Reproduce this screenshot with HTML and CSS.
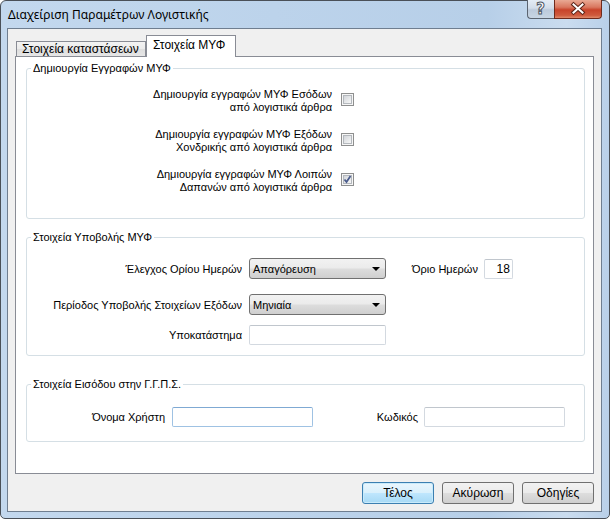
FILE: index.html
```html
<!DOCTYPE html>
<html lang="el">
<head>
<meta charset="utf-8">
<title>Διαχείριση Παραμέτρων Λογιστικής</title>
<link rel="stylesheet" href="styles.css">
</head>
<body>
<div class="window">
  <div class="titlebar">
    <span class="title">Διαχείριση Παραμέτρων Λογιστικής</span>
    <div class="caption-btns">
      <div class="cbtn help">
        <svg width="27" height="19" viewBox="0 0 27 19"><text x="13.5" y="14.5" text-anchor="middle" class="qmark">?</text></svg>
      </div>
      <div class="cbtn close">
        <svg width="48" height="19" viewBox="0 0 48 19">
          <path d="M19.5 5.5 L28.5 13.5 M28.5 5.5 L19.5 13.5" stroke="#5a2418" stroke-width="4" stroke-linecap="square" fill="none"/>
          <path d="M19.5 5.5 L28.5 13.5 M28.5 5.5 L19.5 13.5" stroke="#ffffff" stroke-width="2" stroke-linecap="square" fill="none"/>
        </svg>
      </div>
    </div>
  </div>
  <div class="client">
    <div class="tabs">
      <div class="tab">Στοιχεία καταστάσεων</div>
      <div class="tab active">Στοιχεία ΜΥΦ</div>
    </div>
    <div class="panel">
      <fieldset class="group g1">
        <legend>Δημιουργία Εγγραφών ΜΥΦ</legend>
        <div class="cbrow">
          <div class="cblabel">Δημιουργία εγγραφών ΜΥΦ Εσόδων<br>από λογιστικά άρθρα</div>
          <span class="cb"><span class="cb-in"></span></span>
        </div>
        <div class="cbrow">
          <div class="cblabel">Δημιουργία εγγραφών ΜΥΦ Εξόδων<br>Χονδρικής από λογιστικά άρθρα</div>
          <span class="cb"><span class="cb-in"></span></span>
        </div>
        <div class="cbrow">
          <div class="cblabel">Δημιουργία εγγραφών ΜΥΦ Λοιπών<br>Δαπανών από λογιστικά άρθρα</div>
          <span class="cb checked"><span class="cb-in"></span>
            <svg class="tick" width="13" height="13" viewBox="0 0 13 13"><path d="M3.5 6.5 L5.5 9 L9.5 3" stroke="#4a5c8c" stroke-width="1.8" fill="none"/></svg>
          </span>
        </div>
      </fieldset>

      <fieldset class="group g2">
        <legend>Στοιχεία Υποβολής ΜΥΦ</legend>
        <div class="frow r1">
          <span class="flabel">Έλεγχος Ορίου Ημερών</span>
          <div class="combo"><span>Απαγόρευση</span><i class="arrow"></i></div>
          <span class="limit-label">Όριο Ημερών</span>
          <div class="textbox num">18</div>
        </div>
        <div class="frow r2">
          <span class="flabel">Περίοδος Υποβολής Στοιχείων Εξόδων</span>
          <div class="combo"><span>Μηνιαία</span><i class="arrow"></i></div>
        </div>
        <div class="frow r3">
          <span class="flabel">Υποκατάστημα</span>
          <div class="textbox wide"></div>
        </div>
      </fieldset>

      <fieldset class="group g3">
        <legend>Στοιχεία Εισόδου στην Γ.Γ.Π.Σ.</legend>
        <div class="loginrow">
          <span class="user-label">Όνομα Χρήστη</span>
          <div class="textbox login focused"></div>
          <span class="pass-label">Κωδικός</span>
          <div class="textbox login"></div>
        </div>
      </fieldset>
    </div>
    <div class="buttons">
      <div class="btn default">Τέλος</div>
      <div class="btn">Ακύρωση</div>
      <div class="btn">Οδηγίες</div>
    </div>
  </div>
</div>
</body>
</html>
```
FILE: styles.css
```css
* { box-sizing: border-box; }

body {
  margin: 0;
  font-family: "Liberation Sans", Arial, sans-serif;
  font-size: 11px;
  color: #000;
  background: #fff;
}

.window {
  width: 610px;
  height: 519px;
  border: 1px solid #4a5058;
  border-radius: 6px 6px 5px 5px;
  background: linear-gradient(90deg, #c3d8ee 0%, #bcd3eb 45%, #b7cfe8 80%, #cadcef 93%, #b9d0e9 100%);
  padding: 0 7px 6px 6px;
  display: flex;
  flex-direction: column;
}

.titlebar {
  height: 27px;
  display: flex;
  justify-content: space-between;
  align-items: flex-start;
}

.title {
  font-family: "Noto Sans", "Open Sans", sans-serif;
  font-size: 12px;
  line-height: 16px;
  padding: 6px 0 0 1px;
}

.caption-btns {
  display: flex;
  margin-top: -1px;
}

.cbtn {
  height: 19px;
  border: 1px solid #5b6470;
  border-top: none;
  display: flex;
}
.cbtn svg { display: block; margin: -1px; }

.help {
  width: 27px;
  border-radius: 0 0 0 4px;
  border-right: none;
  background: linear-gradient(180deg, #e4ecf5 0%, #d3dde9 45%, #bccadb 55%, #c8d5e3 100%);
}
.qmark {
  font-family: "DejaVu Sans", sans-serif;
  font-size: 15px;
  font-weight: bold;
  fill: #fff;
  stroke: #4d5663;
  stroke-width: 1;
}

.close {
  width: 48px;
  border-radius: 0 0 4px 0;
  border-color: #6f2a1c;
  background: linear-gradient(180deg, #e9a994 0%, #d9775f 40%, #c8432a 55%, #cf5a3d 85%, #e08a6a 100%);
}

.client {
  flex: 1;
  border: 1px solid #6f7e90;
  background: #f0f0f0;
  padding: 6px 7px 7px 7px;
  display: flex;
  flex-direction: column;
}

.tabs {
  height: 21px;
  display: flex;
  align-items: flex-end;
  padding-left: 1px;
}

.tab {
  height: 15px;
  padding: 0 5px 0 5px;
  line-height: 14px;
  font-size: 12px;
  border: 1px solid #898c95;
  border-bottom: none;
  background: linear-gradient(180deg, #f3f3f3 0%, #ebebeb 50%, #dedede 51%, #e6e6e6 100%);
  width: 130px;
  white-space: nowrap;
}

.tab.active {
  width: 90px;
  height: 22px;
  margin-bottom: -1px;
  padding: 2px 6px 0 6px;
  background: #fff;
  position: relative;
  z-index: 2;
}

.panel {
  flex: 1;
  border: 1px solid #898c95;
  background: #fff;
  padding: 5px 8px 0 10px;
}

.group {
  margin: 0;
  border: 1px solid #d5dfe5;
  border-radius: 3px;
  min-width: 0;
}
.group legend {
  padding: 0 2px;
  line-height: 13px;
}

.g1 { padding: 13px 0 24px 4px; }
.g2 { margin-top: 12px; padding: 14px 0 10px 4px; }
.g3 { margin-top: 22px; padding: 16px 0 14px 4px; }

.cbrow {
  display: grid;
  grid-template-columns: 301px 13px;
  column-gap: 9px;
  height: 26px;
}
.cbrow + .cbrow { margin-top: 14px; }

.cblabel {
  text-align: right;
  line-height: 13px;
  white-space: nowrap;
}

.cb {
  position: relative;
  width: 13px;
  height: 13px;
  margin-top: 5px;
  border: 1px solid #8e8f8f;
  background: #f6f6f6;
  padding: 1px;
}
.cb-in {
  display: block;
  width: 9px;
  height: 9px;
  border: 1px solid #b4b8bd;
  background: linear-gradient(135deg, #d2d5d9 0%, #e6e8ea 55%, #f7f7f7 100%);
}
.cb .tick {
  position: absolute;
  left: -1px;
  top: -1px;
}

.frow {
  display: flex;
  align-items: center;
}
.r2 { margin-top: 15px; }
.r3 { margin-top: 10px; }

.flabel {
  width: 211px;
  text-align: right;
  margin-right: 7px;
  white-space: nowrap;
}

.combo {
  width: 137px;
  height: 21px;
  border: 1px solid #707070;
  border-radius: 3px;
  background: linear-gradient(180deg, #f2f2f2 0%, #ebebeb 48%, #dddddd 52%, #cfcfcf 100%);
  display: flex;
  align-items: center;
  justify-content: space-between;
  padding: 0 5px 0 3px;
}
.arrow {
  width: 0;
  height: 0;
  border-left: 4px solid transparent;
  border-right: 4px solid transparent;
  border-top: 4px solid #000;
  margin-top: 1px;
}

.limit-label {
  margin-left: 26px;
  margin-right: 6px;
  white-space: nowrap;
}

.textbox {
  height: 20px;
  border: 1px solid #d3d9e0;
  border-top-color: #c0c6cd;
  border-radius: 2px;
  background: #fff;
}
.textbox.num {
  width: 29px;
  text-align: right;
  padding-right: 2px;
  font-size: 12px;
  line-height: 18px;
}
.textbox.wide { width: 137px; }

.loginrow {
  display: flex;
  align-items: center;
}
.user-label {
  width: 134px;
  text-align: right;
  margin-right: 7px;
}
.textbox.login { width: 141px; }
.textbox.focused { border-color: #9fc2e3; border-top-color: #7fa9d3; }
.pass-label {
  width: 105px;
  text-align: right;
  margin-right: 6px;
}

.buttons {
  margin-top: 8px;
  display: flex;
  justify-content: flex-end;
  gap: 8px;
}

.btn {
  width: 72px;
  height: 22px;
  border: 1px solid #707070;
  border-radius: 3px;
  background: linear-gradient(180deg, #f2f2f2 0%, #ebebeb 48%, #dddddd 52%, #cfcfcf 100%);
  text-align: center;
  line-height: 20px;
  font-size: 12px;
}
.btn.default {
  border-color: #3c7fb1;
  background: linear-gradient(180deg, #eaf6fd 0%, #d9f0fc 48%, #bee6fd 52%, #a7d9f5 100%);
  box-shadow: inset 0 0 0 1px #c9ebfb;
}
```
